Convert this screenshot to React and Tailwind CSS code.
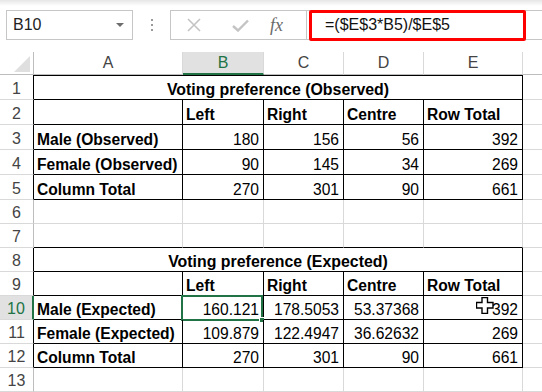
import React from "react";

// column widths include the 1px right border
var COLS = [
  { key: "A", w: "w-[149px]" },
  { key: "B", w: "w-[81px]" },
  { key: "C", w: "w-[80px]" },
  { key: "D", w: "w-[80px]" },
  { key: "E", w: "w-[99px]" },
];

var ROWS = [
  { n: 1, h: "h-[25px]", title: "Voting preference (Observed)", top: true },
  { n: 2, h: "h-[25px]", head: true, cells: ["", "Left", "Right", "Centre", "Row Total"] },
  { n: 3, h: "h-[25px]", cells: ["Male (Observed)", "180", "156", "56", "392"] },
  { n: 4, h: "h-[25px]", cells: ["Female (Observed)", "90", "145", "34", "269"] },
  { n: 5, h: "h-[25px]", cells: ["Column Total", "270", "301", "90", "661"] },
  { n: 6, h: "h-[24px]" },
  { n: 7, h: "h-[24px]", lineBelow: true },
  { n: 8, h: "h-[24px]", title: "Voting preference (Expected)" },
  { n: 9, h: "h-[24px]", head: true, cells: ["", "Left", "Right", "Centre", "Row Total"] },
  { n: 10, h: "h-[24px]", selected: true, cells: ["Male (Expected)", "160.121", "178.5053", "53.37368", "392"] },
  { n: 11, h: "h-[24px]", cells: ["Female (Expected)", "109.879", "122.4947", "36.62632", "269"] },
  { n: 12, h: "h-[24px]", cells: ["Column Total", "270", "301", "90", "661"] },
  { n: 13, h: "h-[24px]" },
];

function inTable(n) {
  return (n >= 1 && n <= 5) || (n >= 8 && n <= 12);
}

function FormulaBar() {
  return (
    <div className="flex h-[52px] items-start bg-white bg-gradient-to-b from-[#e6e6e6] to-white pt-[10px] [background-size:100%_6px] [background-repeat:no-repeat]">
      <div className="ml-[6px] flex h-[30px] w-[127px] shrink-0 items-center justify-between border border-[#c6c6c6] bg-white pl-[6px] pr-[8px]">
        <span className="text-[16px] text-[#222]">B10</span>
        <span className="h-0 w-0 border-x-[4px] border-t-[4px] border-x-transparent border-t-[#6d6d6d]" />
      </div>
      <div className="flex h-[30px] w-[37px] shrink-0 flex-col items-center justify-center gap-[3px]">
        <span className="h-[2px] w-[2px] bg-[#9a9a9a]" />
        <span className="h-[2px] w-[2px] bg-[#9a9a9a]" />
        <span className="h-[2px] w-[2px] bg-[#9a9a9a]" />
      </div>
      <div className="flex h-[30px] w-[137px] shrink-0 items-center border border-[#c6c6c6] bg-white">
        <svg width="14" height="14" viewBox="0 0 14 14" className="ml-[16px]">
          <path d="M1 1 L13 13 M13 1 L1 13" stroke="#c4c4c4" strokeWidth="1.6" fill="none" />
        </svg>
        <svg width="17" height="13" viewBox="0 0 17 13" className="ml-[31px]">
          <path d="M1 7 L6 11.5 L16 1.5" stroke="#c4c4c4" strokeWidth="2.4" fill="none" />
        </svg>
        <span className="ml-[21px] font-['Liberation_Serif',serif] text-[18px] italic text-[#6a6a6a]">fx</span>
      </div>
      <div className="relative flex h-[30px] flex-1 items-center border-y border-[#c6c6c6] bg-white">
        <span className="ml-[18px] text-[16px] text-[#111]">=($E$3*B5)/$E$5</span>
        <div className="ml-auto mr-[16px] h-full w-px bg-[#d4d4d4]" />
        <div className="absolute left-[2px] top-[-1px] h-[31px] w-[217px] rounded-[2px] border-[3px] border-[#ff0000]" />
      </div>
    </div>
  );
}

function HeaderRow() {
  return (
    <div className="flex h-[23px]">
      <div className="flex w-[34px] shrink-0 items-end justify-end border-b border-r border-b-[#bdbdbd] border-r-[#bdbdbd] bg-white pb-[2px] pr-[3px]">
        <svg width="16" height="16" viewBox="0 0 16 16">
          <polygon points="16,0 16,16 0,16" fill="#dfdfdf" />
        </svg>
      </div>
      {COLS.map(function (c) {
        var sel = c.key === "B";
        return (
          <div key={c.key}
            className={c.w + " flex shrink-0 items-center justify-center border-r border-r-[#d9d9d9] text-[16px] " +
              (sel ? "border-b-2 border-b-[#217346] bg-[#e1e1e1] text-[#217346]" : "border-b border-b-[#bdbdbd] bg-white text-[#444]")}>
            {c.key}
          </div>
        );
      })}
      <div className="flex-1 border-b border-b-[#bdbdbd] bg-white" />
    </div>
  );
}

function SheetRow(props) {
  var row = props.row;
  var t = inTable(row.n);
  var rowHead = row.selected
    ? "border-r-2 border-r-[#217346] bg-[#e1e1e1] text-[#217346]"
    : "border-r " + (t ? "border-r-black" : "border-r-[#bdbdbd]") + " bg-white text-[#444]";
  var blackBottom = t || row.lineBelow;
  var cellBase = "flex shrink-0 items-end whitespace-nowrap border-b border-r leading-[18px] text-[15.6px] text-black ";
  var bottomCls = blackBottom ? "border-b-black" : "border-b-[#d9d9d9]";
  var topCls = row.top ? " border-t border-t-black" : "";

  var cells;
  if (row.title) {
    cells = (
      <div className={cellBase + "w-[489px] justify-center border-r-black text-[15.9px] font-bold " + bottomCls + topCls}>
        {row.title}
      </div>
    );
  } else {
    cells = COLS.map(function (c, i) {
      var v = row.cells ? row.cells[i] : "";
      var label = i === 0 || row.head;
      var sel = row.selected && c.key === "B";
      return (
        <div key={c.key}
          className={cellBase + c.w + " relative " + (t ? "border-r-black " : "border-r-[#d9d9d9] ") + bottomCls +
            (label ? " justify-start pl-[3px] font-bold" : " justify-end pr-[4px]")}>
          {v}
          {sel && (
            <div className="absolute -left-[2px] -top-[1px] h-[26px] w-[82px] border-2 border-[#217346]">
              <div className="absolute -bottom-[4px] -right-[4px] h-[6px] w-[6px] border border-white bg-[#217346]" />
            </div>
          )}
        </div>
      );
    });
  }

  return (
    <div className={"flex " + row.h}>
      <div className={"flex w-[34px] shrink-0 items-end justify-center border-b border-b-[#d9d9d9] pb-[1px] text-[16px] leading-[18px] " + rowHead}>
        {row.n}
      </div>
      {cells}
      <div className={"flex-1 border-b border-b-[#d9d9d9]" + (row.top ? " border-t border-t-transparent" : "")} />
    </div>
  );
}

function Cursor() {
  return (
    <svg width="18" height="17" viewBox="0 0 18 17" className="pointer-events-none absolute left-[476px] top-[297px]">
      <path d="M6 0.5 H11.5 V5.5 H17 V11 H11.5 V16.5 H6 V11 H0.5 V5.5 H6 Z" fill="white" stroke="black" strokeWidth="1.4" />
    </svg>
  );
}

export default function App() {
  return (
    <div className="relative h-[392px] w-[542px] overflow-hidden bg-white font-['Liberation_Sans',Arial,sans-serif]">
      <FormulaBar />
      <HeaderRow />
      {ROWS.map(function (r) {
        return <SheetRow key={r.n} row={r} />;
      })}
      <Cursor />
    </div>
  );
}
